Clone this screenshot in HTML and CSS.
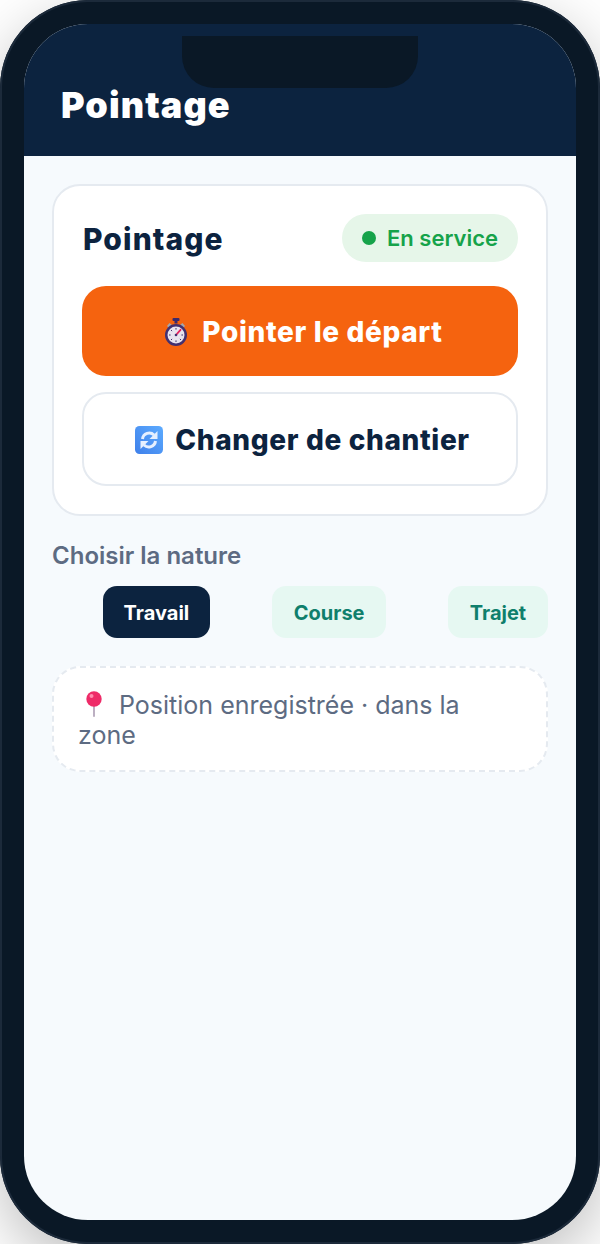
FILE: index.html
```html
<!DOCTYPE html>
<html lang="fr">
<head>
    <meta charset="UTF-8">
    <meta name="viewport" content="width=device-width, initial-scale=1.0">
    <title>Pointage</title>
    <link rel="stylesheet" href="styles.css">
</head>
<body>

<div class="phone">
  <div class="screen">
    <div class="notch"></div>
    <header class="topbar">
      <h1>Pointage</h1>
    </header>

    <main class="content">
      <section class="card">
        <div class="card-head">
          <h2>Pointage</h2>
          <span class="badge"><i class="dot"></i>En service</span>
        </div>
        <button class="btn btn-primary">
          <svg class="ico-watch" viewBox="0 0 22 28" aria-hidden="true">
            <rect x="7.500" y="0" width="7" height="3" rx="1" fill="#3d2a6b"/>
            <rect x="9.500" y="2.500" width="3" height="3" fill="#3d2a6b"/>
            <path d="M2 8 4.500 5 7 7 4 10z" fill="#a3a7ae"/>
            <path d="M20 8 17.500 5 15 7 18 10z" fill="#a3a7ae"/>
            <circle cx="11" cy="17" r="11" fill="#43306f"/>
            <circle cx="11" cy="17" r="8.500" fill="#e8e4ee"/>
            <path d="M11 10v1.600M11 22.400V24M4 17h1.600M16.400 17H18M6 12l1.100 1.100M14.900 20.900 16 22M6 22l1.100-1.100" stroke="#43306f" stroke-width="1" fill="none"/>
            <path d="M11 17 15.500 11.800" stroke="#e5235f" stroke-width="1.800" stroke-linecap="round" fill="none"/>
            <circle cx="11" cy="17" r="1.300" fill="#43306f"/>
          </svg>
          <span>Pointer le départ</span>
        </button>
        <button class="btn btn-outline">
          <svg class="ico-swap" viewBox="0 0 28 28" aria-hidden="true">
            <defs>
              <linearGradient id="swapBg" x1="1" y1="0" x2="0" y2="1">
                <stop offset="0" stop-color="#5cabff"/>
                <stop offset="1" stop-color="#3f80ea"/>
              </linearGradient>
            </defs>
            <rect width="28" height="28" rx="4.500" fill="url(#swapBg)"/>
            <path d="M7.500 13A6.800 6.800 0 0 1 19 9" stroke="#e6f0ff" stroke-width="3" fill="none"/>
            <path d="M22.500 5v8h-8z" fill="#e6f0ff"/>
            <path d="M20.500 15A6.800 6.800 0 0 1 9 19" stroke="#e6f0ff" stroke-width="3" fill="none"/>
            <path d="M5.500 23v-8h8z" fill="#e6f0ff"/>
          </svg>
          <span>Changer de chantier</span>
        </button>
      </section>

      <p class="label">Choisir la nature</p>
      <div class="chips">
        <button class="chip chip-active">Travail</button>
        <button class="chip">Course</button>
        <button class="chip">Trajet</button>
      </div>

      <div class="note">
        <svg class="ico-pin" viewBox="0 0 18 26" aria-hidden="true">
          <rect x="8.300" y="12" width="1.400" height="14" rx="0.700" fill="#a08ea8"/>
          <circle cx="9" cy="8" r="7.700" fill="#ee2b68"/>
          <circle cx="6.500" cy="5" r="2" fill="#ff8cae"/>
        </svg>
        Position enregistrée · dans la zone
      </div>
    </main>
  </div>
</div>

</body>
</html>
```

FILE: styles.css
```css
* {
    box-sizing: border-box;
}
html, body {
    margin: 0;
    height: 100%;
    background: #fff;
    overflow: hidden;
}
body {
    font-family: 'Inter', Arial, sans-serif;
    color: #0d2340;
}
.phone {
    width: 600px;
    height: 1244px;
    padding: 24px;
    background: #0a1826;
    border-radius: 88px;
    box-shadow: inset 0 0 0 2px #1c2a3a, 0 20px 60px rgba(0,0,0,0.25);
}
.screen {
    position: relative;
    height: 100%;
    background: #f6fafd;
    border-radius: 64px;
    overflow: hidden;
    display: flex;
    flex-direction: column;
}
.notch {
    position: absolute;
    top: 12px;
    left: 158px;
    width: 236px;
    height: 52px;
    background: #0a1826;
    border-radius: 0 0 32px 32px;
}
.topbar {
    height: 132px;
    flex: none;
    background: #0c233f;
    padding: 60px 36px 0 37px;
}
.topbar h1 {
    margin: 0;
    font-size: 36px;
    line-height: 42px;
    font-weight: 900;
    color: #fff;
    letter-spacing: 1.1px;
}
.content {
    padding: 28px;
}
.card {
    background: #fff;
    border: 2px solid #e5eaf0;
    border-radius: 28px;
    padding: 28px;
    height: 332px;
}
.card-head {
    display: flex;
    justify-content: space-between;
    align-items: center;
    margin-bottom: 24px;
}
.card-head h2 {
    margin: 2px 0 0 1px;
    font-size: 30px;
    font-weight: 800;
    letter-spacing: 1.1px;
    color: #0c233f;
}
.badge {
    display: flex;
    align-items: center;
    gap: 11px;
    width: 176px;
    height: 48px;
    padding-left: 20px;
    border-radius: 24px;
    background: #e6f6e9;
    color: #16a34a;
    font-size: 22px;
    font-weight: 600;
}
.dot {
    width: 14px;
    height: 14px;
    border-radius: 50%;
    background: #16a34a;
}
.btn {
    display: flex;
    align-items: center;
    justify-content: center;
    width: 100%;
    border-radius: 24px;
    font-family: inherit;
    font-size: 28px;
    font-weight: 800;
    letter-spacing: 0.65px;
}
.btn-primary {
    height: 90px;
    padding: 2px 0 0 8px;
    background: #f5630f;
    color: #fff;
    border: none;
    gap: 15px;
    margin-bottom: 16px;
}
.btn-outline {
    height: 94px;
    padding: 2px 0 0 5px;
    background: #fff;
    color: #0c233f;
    border: 2px solid #e5eaf0;
    gap: 12px;
}
.ico-watch {
    width: 22px;
    height: 28px;
}
.ico-swap {
    width: 28px;
    height: 28px;
}
.label {
    margin: 28px 0 18px;
    font-size: 24px;
    line-height: 24px;
    font-weight: 600;
    color: #5d6b82;
}
.chips {
    display: flex;
    justify-content: flex-end;
    gap: 62px;
    margin-bottom: 28px;
}
.chip {
    min-width: 100px;
    height: 52px;
    padding: 2px 21.5px 0;
    border: none;
    border-radius: 14px;
    background: #e6f8f2;
    color: #0f7f6c;
    font-family: inherit;
    font-size: 20px;
    font-weight: 700;
}
.chip-active {
    padding: 2px 21px 0;
    background: #0c233f;
    color: #fff;
}
.note {
    height: 106px;
    background: #fff;
    border: 2px dashed #e5eaf0;
    border-radius: 28px;
    padding: 22px 24px;
    font-size: 25px;
    line-height: 30px;
    color: #5d6b82;
}
.ico-pin {
    width: 18px;
    height: 26px;
    margin: 0 9px 0 7px;
    vertical-align: -3px;
}
```
